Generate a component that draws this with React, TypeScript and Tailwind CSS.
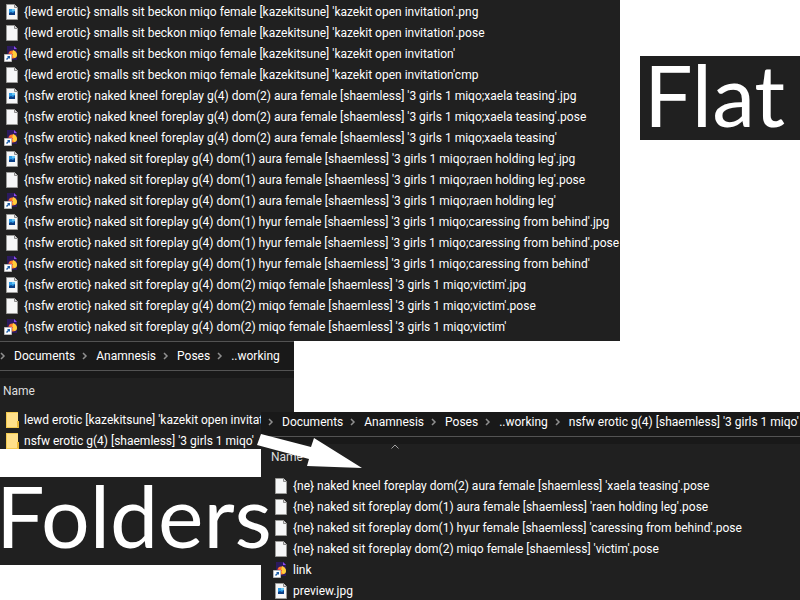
type Kind = "image" | "blank" | "link" | "folder";
type Entry = { kind: Kind; name: string };

const flatFiles: Entry[] = [
  { kind: "image", name: "{lewd erotic} smalls sit beckon miqo female [kazekitsune] 'kazekit open invitation'.png" },
  { kind: "blank", name: "{lewd erotic} smalls sit beckon miqo female [kazekitsune] 'kazekit open invitation'.pose" },
  { kind: "link", name: "{lewd erotic} smalls sit beckon miqo female [kazekitsune] 'kazekit open invitation'" },
  { kind: "blank", name: "{lewd erotic} smalls sit beckon miqo female [kazekitsune] 'kazekit open invitation'cmp" },
  { kind: "image", name: "{nsfw erotic} naked kneel foreplay g(4) dom(2) aura female [shaemless] '3 girls 1 miqo;xaela teasing'.jpg" },
  { kind: "blank", name: "{nsfw erotic} naked kneel foreplay g(4) dom(2) aura female [shaemless] '3 girls 1 miqo;xaela teasing'.pose" },
  { kind: "link", name: "{nsfw erotic} naked kneel foreplay g(4) dom(2) aura female [shaemless] '3 girls 1 miqo;xaela teasing'" },
  { kind: "image", name: "{nsfw erotic} naked sit foreplay g(4) dom(1) aura female [shaemless] '3 girls 1 miqo;raen holding leg'.jpg" },
  { kind: "blank", name: "{nsfw erotic} naked sit foreplay g(4) dom(1) aura female [shaemless] '3 girls 1 miqo;raen holding leg'.pose" },
  { kind: "link", name: "{nsfw erotic} naked sit foreplay g(4) dom(1) aura female [shaemless] '3 girls 1 miqo;raen holding leg'" },
  { kind: "image", name: "{nsfw erotic} naked sit foreplay g(4) dom(1) hyur female [shaemless] '3 girls 1 miqo;caressing from behind'.jpg" },
  { kind: "blank", name: "{nsfw erotic} naked sit foreplay g(4) dom(1) hyur female [shaemless] '3 girls 1 miqo;caressing from behind'.pose" },
  { kind: "link", name: "{nsfw erotic} naked sit foreplay g(4) dom(1) hyur female [shaemless] '3 girls 1 miqo;caressing from behind'" },
  { kind: "image", name: "{nsfw erotic} naked sit foreplay g(4) dom(2) miqo female [shaemless] '3 girls 1 miqo;victim'.jpg" },
  { kind: "blank", name: "{nsfw erotic} naked sit foreplay g(4) dom(2) miqo female [shaemless] '3 girls 1 miqo;victim'.pose" },
  { kind: "link", name: "{nsfw erotic} naked sit foreplay g(4) dom(2) miqo female [shaemless] '3 girls 1 miqo;victim'" },
];

const folders: Entry[] = [
  { kind: "folder", name: "lewd erotic [kazekitsune] 'kazekit open invitation'" },
  { kind: "folder", name: "nsfw erotic g(4) [shaemless] '3 girls 1 miqo'" },
];

const folderFiles: Entry[] = [
  { kind: "blank", name: "{ne} naked kneel foreplay dom(2) aura female [shaemless] 'xaela teasing'.pose" },
  { kind: "blank", name: "{ne} naked sit foreplay dom(1) aura female [shaemless] 'raen holding leg'.pose" },
  { kind: "blank", name: "{ne} naked sit foreplay dom(1) hyur female [shaemless] 'caressing from behind'.pose" },
  { kind: "blank", name: "{ne} naked sit foreplay dom(2) miqo female [shaemless] 'victim'.pose" },
  { kind: "link", name: "link" },
  { kind: "image", name: "preview.jpg" },
];

function FileIcon({ kind }: { kind: Kind }) {
  return (
    <svg viewBox="0 0 16 16" className="h-4 w-4 shrink-0" aria-hidden="true">
      {kind === "folder" && (
        <>
          <path d="M2 0h12v9h1v7H2z" fill="#ffe08a" />
          <path d="M2 0h12v1H3v14H2z" fill="#f2c94f" />
          <path d="M13 9h2v7h-2z" fill="#e9b93a" />
          <path d="M2 15h12v1H2z" fill="#f2c94f" />
        </>
      )}
      {(kind === "blank" || kind === "image") && (
        <>
          <path d="M2.500 .5h8l3 3v12h-11z" fill="#f6f7f8" stroke="#9b9b99" />
          <path d="M10.500 .5v3h3" fill="#dcdcdc" stroke="#8b8b8b" />
        </>
      )}
      {kind === "image" && (
        <>
          <path d="M5 5h6v6H5z" fill="#2f9be6" />
          <path d="M8 5h3v2H8z" fill="#6cc8f5" />
          <path d="M5 9l2-1 2 1 2-2v4H5z" fill="#0b3f86" />
        </>
      )}
      {kind === "link" && (
        <>
          <path d="M3 0h7l3 3v11H3z" fill="#2b1a5e" />
          <path d="M10 0v3h3z" fill="#8a4bf0" />
          <circle cx="8.500" cy="8.500" r="4" fill="#ff7a2a" />
          <path d="M9 4c3 1 4 3 4 5s-1 3-3 3L8 9z" fill="#ffcf3a" />
          <path d="M5 6c0 1 1 2 4 2l-1 2-3-2z" fill="#e8305c" />
          <path d="M.5 8.500h7v7h-7z" fill="#fff" stroke="#b9b9b9" />
          <path d="M3 10h3v3L5 12l-2 2-1-1 2-2z" fill="#1d5fa8" />
        </>
      )}
    </svg>
  );
}

function FileList({ entries }: { entries: Entry[] }) {
  return (
    <ul>
      {entries.map((e) => (
        <li key={e.name} className="flex h-[21px] items-center gap-1 whitespace-nowrap pl-1">
          <FileIcon kind={e.kind} />
          <span>{e.name}</span>
        </li>
      ))}
    </ul>
  );
}

function Chevron() {
  return (
    <svg viewBox="0 0 6 8" className="h-2 w-[6px] shrink-0" aria-hidden="true">
      <path d="M1 1l3 3-3 3" fill="none" stroke="#8f8f8f" strokeWidth="1.5" />
    </svg>
  );
}

function Breadcrumbs({ path }: { path: string[] }) {
  return (
    <nav className="flex items-center gap-[7px] whitespace-nowrap">
      {path.map((part) => (
        <span key={part} className="flex items-center gap-2">
          <Chevron />
          <button type="button">{part}</button>
        </span>
      ))}
    </nav>
  );
}

export default function App() {
  return (
    <main className="h-screen overflow-hidden bg-white font-['Roboto','Open_Sans',sans-serif] text-[12px] leading-4 text-white">
      <div className="flex items-start">
        <section className="w-[620px] shrink-0 bg-[#202020] pt-px pb-1">
          <FileList entries={flatFiles} />
        </section>
        <h1 className="mt-14 ml-5 h-[84px] flex-1 bg-[#202020] pl-1 font-['Lato',sans-serif] text-[86px] leading-[76px]">
          Flat
        </h1>
      </div>

      <div className="flex items-start">
        <div className="w-[261px] shrink-0">
          <section className="h-[108px] w-[294px] overflow-hidden bg-[#202020]">
            <header className="h-[37px] bg-[#191919]">
              <div className="flex h-[30px] items-center border-y border-[#535353]">
                <Breadcrumbs path={["Documents", "Anamnesis", "Poses", "..working"]} />
              </div>
            </header>
            <div className="h-[31px] pt-[5px] pl-[3px] text-[#dedede]">Name</div>
            <FileList entries={folders} />
          </section>
          <h1 className="relative z-20 mt-7 h-[88px] bg-[#202020] font-['Lato',sans-serif] text-[86px] leading-[76px]">
            <span className="-ml-1">Folders</span>
          </h1>
        </div>

        <section className="relative z-10 mt-[71px] min-w-0 flex-1 bg-[#202020]">
          <header className="h-8 bg-[#191919]">
            <div className="flex h-[25px] items-center overflow-hidden border-b border-[#535353] pb-1 pl-[7px]">
              <Breadcrumbs
                path={["Documents", "Anamnesis", "Poses", "..working", "nsfw erotic g(4) [shaemless] '3 girls 1 miqo'"]}
              />
            </div>
          </header>
          <div className="flex h-[31px] items-start pl-[10px] text-[#dedede]">
            <span className="w-[120px] pt-[5px]">Name</span>
            <svg viewBox="0 0 8 5" className="h-[5px] w-2" aria-hidden="true">
              <path d="M.5 4.500L4 1l3.500 3.500" fill="none" stroke="#a0a0a0" />
            </svg>
          </div>
          <div className="pl-2">
            <FileList entries={folderFiles} />
          </div>
          <svg viewBox="0 0 106 36" className="absolute top-[21px] -left-[4px] h-9 w-[106px]" aria-hidden="true">
            <path d="M4 1L54 14L57 5L105 35L50 33L52 26L0 12z" fill="#fff" />
          </svg>
        </section>
      </div>
    </main>
  );
}
